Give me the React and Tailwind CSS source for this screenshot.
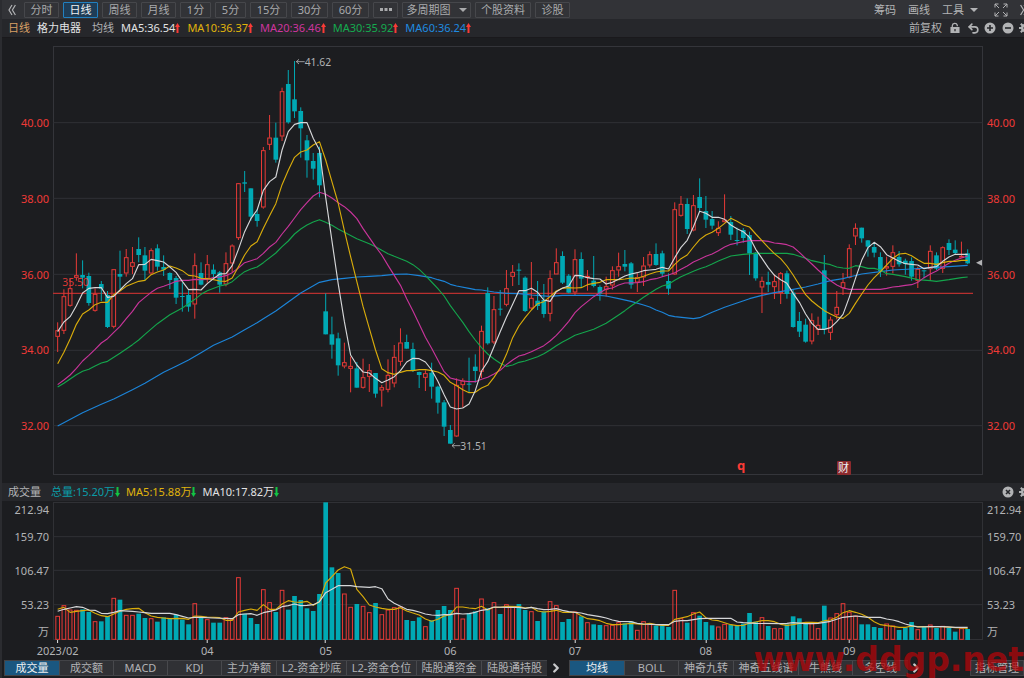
import { ChevronRight, Undo2 } from 'lucide-react'

const UP = '#e83a37'
const DOWN = '#00a9b4'

// 坐标系: 每根K线间隔 18.7, 第一根在 x=173
const xAt = (i) => 173 + (i * 910 * 3) / 146

// [涨=1/跌=0, 最高, 实体上沿, 实体下沿, 最低, 成交量]
const candles = [
  [1, 847, 871, 890, 936, 408], [1, 748, 769, 872, 882, 376], [1, 715, 745, 797, 800, 389], [1, 640, 706, 713, 722, 390],
  [0, 661, 705, 713, 745, 388], [0, 698, 708, 789, 797, 396], [1, 745, 762, 812, 815, 424], [0, 723, 732, 746, 783, 424],
  [0, 753, 765, 861, 864, 408], [1, 688, 688, 860, 865, 354], [0, 632, 702, 710, 747, 359], [1, 627, 652, 700, 710, 405],
  [1, 621, 667, 680, 702, 405], [0, 592, 627, 645, 667, 401], [0, 621, 646, 692, 722, 414], [1, 625, 631, 700, 705, 415],
  [0, 613, 625, 680, 692, 425], [0, 646, 681, 689, 708, 412], [0, 697, 699, 720, 747, 416], [0, 708, 714, 773, 792, 404],
  [0, 728, 768, 771, 815, 419], [0, 751, 765, 800, 815, 433], [1, 640, 676, 793, 836, 370], [0, 667, 699, 734, 736, 413],
  [1, 645, 673, 716, 728, 418], [0, 673, 689, 702, 717, 428], [0, 693, 697, 734, 758, 428], [1, 637, 670, 733, 739, 412],
  [1, 613, 617, 670, 698, 418], [1, 429, 430, 594, 600, 292], [0, 393, 427, 431, 456, 401], [0, 445, 445, 530, 542, 414],
  [0, 507, 522, 543, 560, 432], [1, 321, 331, 502, 506, 328], [1, 225, 293, 314, 330, 367], [0, 248, 293, 359, 368, 396],
  [1, 143, 154, 289, 303, 330], [0, 90, 132, 247, 251, 389], [0, 63, 178, 214, 234, 348], [0, 202, 213, 265, 353, 360],
  [0, 285, 301, 361, 413, 385], [0, 339, 363, 386, 419, 393], [0, 320, 339, 436, 472, 342], [0, 760, 814, 883, 883, 67],
  [0, 830, 883, 914, 956, 262], [0, 878, 895, 976, 1007, 279], [1, 908, 967, 979, 985, 341], [1, 950, 978, 986, 1057, 381],
  [0, 966, 985, 1043, 1043, 372], [1, 956, 1012, 1043, 1046, 378], [1, 972, 991, 1010, 1056, 397], [0, 999, 999, 1061, 1073, 369],
  [1, 1035, 1042, 1051, 1100, 403], [1, 958, 1005, 1049, 1057, 389], [1, 915, 951, 1030, 1042, 382], [1, 865, 908, 965, 977, 380],
  [0, 884, 906, 926, 926, 420], [0, 908, 927, 993, 996, 423], [0, 995, 996, 1005, 1044, 412], [1, 991, 1000, 1013, 1053, 439],
  [0, 968, 998, 1040, 1076, 421], [0, 1037, 1040, 1088, 1121, 390], [0, 1080, 1087, 1160, 1188, 378], [0, 1155, 1170, 1211, 1211, 390],
  [1, 1015, 1035, 1189, 1191, 324], [1, 1015, 1022, 1035, 1103, 416], [0, 953, 1031, 1034, 1057, 399], [0, 943, 980, 993, 1028, 394],
  [1, 857, 873, 995, 1014, 356], [0, 742, 759, 910, 914, 385], [1, 768, 808, 907, 912, 367], [0, 750, 806, 809, 827, 402],
  [1, 690, 745, 794, 799, 373], [1, 675, 696, 710, 738, 380], [0, 670, 689, 692, 735, 372], [0, 709, 713, 813, 816, 390],
  [1, 666, 774, 805, 807, 394], [0, 723, 782, 798, 810, 423], [0, 732, 780, 822, 833, 394], [1, 691, 715, 821, 844, 364],
  [1, 625, 667, 703, 703, 376], [0, 634, 648, 728, 732, 426], [0, 702, 707, 758, 760, 417], [1, 628, 658, 757, 766, 395],
  [0, 637, 657, 716, 742, 409], [1, 690, 708, 713, 752, 427], [0, 648, 722, 738, 742, 433], [0, 736, 741, 761, 782, 435],
  [1, 710, 739, 749, 770, 436], [1, 679, 691, 736, 749, 435], [1, 638, 679, 691, 710, 427], [0, 630, 672, 680, 694, 430],
  [0, 666, 670, 734, 746, 424], [1, 700, 712, 727, 756, 450], [1, 651, 677, 712, 738, 424], [1, 634, 643, 676, 683, 430],
  [0, 610, 642, 675, 677, 437], [0, 632, 640, 701, 710, 436], [0, 700, 723, 746, 764, 441], [1, 487, 508, 703, 705, 330],
  [1, 468, 492, 527, 530, 415], [0, 475, 492, 567, 582, 428], [1, 465, 496, 571, 574, 397], [0, 415, 471, 504, 513, 407],
  [0, 468, 513, 539, 564, 426], [0, 513, 537, 557, 568, 436], [1, 544, 564, 579, 588, 440], [1, 463, 539, 546, 547, 432],
  [0, 528, 546, 584, 600, 435], [0, 563, 600, 603, 616, 438], [0, 564, 570, 594, 608, 431], [0, 575, 585, 640, 705, 399],
  [0, 636, 638, 715, 722, 425], [1, 710, 723, 742, 819, 412], [0, 695, 726, 734, 756, 438], [1, 703, 724, 741, 777, 445],
  [1, 696, 700, 759, 792, 445], [0, 692, 700, 762, 776, 433], [0, 748, 758, 861, 863, 409], [0, 816, 843, 875, 891, 415],
  [0, 836, 854, 905, 908, 430], [1, 820, 841, 904, 913, 430], [1, 830, 855, 869, 885, 445], [0, 645, 691, 868, 883, 377],
  [1, 830, 839, 878, 900, 413], [1, 753, 801, 825, 838, 400], [1, 699, 727, 744, 765, 370], [1, 613, 625, 713, 715, 396],
  [1, 550, 564, 589, 615, 407], [0, 563, 563, 595, 608, 433], [0, 600, 601, 620, 650, 433], [0, 607, 621, 638, 652, 441],
  [0, 637, 651, 693, 711, 444], [1, 650, 679, 685, 707, 431], [1, 616, 637, 680, 700, 437], [0, 633, 651, 673, 680, 450],
  [0, 656, 662, 672, 704, 442], [0, 652, 663, 710, 722, 426], [1, 680, 687, 722, 744, 448], [0, 691, 691, 694, 715, 441],
  [1, 616, 633, 687, 723, 434], [0, 637, 646, 686, 690, 444], [1, 619, 622, 686, 699, 438], [0, 598, 609, 630, 645, 444],
  [0, 601, 629, 639, 645, 455], [1, 605, 648, 651, 652, 445], [0, 628, 640, 670, 672, 447],
]

// 均线: "序号,y"
const priceLines = [
  {
    color: '#1c84d8',
    data: '0,1158 4,1118 7,1093 9,1077 12,1049 14,1030 17,997 19,979 21,960 23,938 25,916 27,899 28,891 30,869 32,848 33,836 35,813 37,786 39,759 42,727 44,719 46,715 48,711 50,709 52,707 54,703 56,702 58,707 60,713 61,719 62,724 63,733 64,738 66,745 67,749 68,750 70,756 72,760 74,761 76,765 79,769 81,766 87,766 88,768 90,776 92,784 94,795 95,801 96,810 97,817 98,826 99,830 102,836 103,833 105,817 107,802 109,789 111,776 113,766 115,758 118,748 120,741 122,732 124,722 126,716 127,711 129,702 132,695 134,690 137,687 140,683 143,680 146,676',
  },
  {
    color: '#14a54c',
    data: '0,1041 1,1030 2,1017 3,1004 4,994 5,988 6,978 7,969 8,964 10,940 12,914 13,900 14,883 16,851 18,824 20,804 22,778 23,763 24,752 26,738 27,734 28,725 29,709 30,695 31,687 32,681 33,668 35,639 36,620 37,603 38,582 39,567 40,555 41,546 42,539 43,547 44,556 45,567 46,577 48,596 50,611 51,620 52,631 53,641 54,649 55,656 56,664 57,674 58,688 59,706 60,726 61,746 62,768 63,797 64,822 65,847 66,875 67,900 68,923 69,942 70,957 71,970 72,979 73,975 74,967 75,963 77,950 78,941 79,930 80,917 81,906 82,896 83,886 84,880 86,868 88,850 90,825 91,812 92,798 93,785 94,772 95,760 96,748 97,738 98,733 99,721 100,710 101,702 102,694 103,686 104,680 105,672 106,663 108,648 110,643 112,640 117,640 118,643 120,655 121,662 123,670 124,674 125,681 126,684 127,685 128,677 129,680 130,685 131,685 132,690 133,701 134,703 136,710 138,719 140,722 141,724 143,719 145,713 146,711',
  },
  {
    color: '#c8349a',
    data: '0,1034 1,1020 2,1005 3,985 4,963 5,946 6,928 7,909 8,896 9,877 10,859 11,836 12,814 13,788 14,772 15,757 16,745 17,739 18,732 19,724 20,721 21,721 22,718 23,719 24,718 25,713 26,711 27,707 28,698 29,684 30,668 31,662 32,656 33,640 34,621 35,607 36,582 37,559 38,534 39,509 40,488 41,468 42,457 43,463 44,474 45,488 46,500 47,516 48,536 49,566 50,593 51,620 52,645 53,676 54,706 55,736 56,776 57,813 58,852 59,892 60,925 61,960 62,995 63,1014 64,1019 65,1023 66,1025 67,1025 68,1018 69,1012 70,1002 71,991 72,974 73,960 74,948 75,943 76,935 77,926 78,917 79,903 80,886 81,866 82,844 83,818 84,800 85,785 86,770 87,758 88,747 89,744 90,735 91,729 93,728 94,725 95,719 96,716 97,710 98,705 99,698 100,688 101,678 102,666 103,658 104,649 105,642 106,632 107,621 108,613 109,609 110,605 111,602 113,602 114,604 115,609 116,611 117,614 118,621 119,637 120,655 121,672 122,690 123,707 124,722 125,735 126,744 127,748 132,748 133,745 134,741 135,739 136,736 137,734 138,727 139,713 140,702 141,693 142,681 143,670 144,661 145,654 146,648',
  },
  {
    color: '#d9ac0b',
    data: '0,971 1,937 2,897 3,853 4,822 5,810 6,794 7,787 8,787 9,764 10,753 11,739 12,731 13,724 14,721 15,704 16,696 17,690 18,678 19,684 20,692 21,706 22,708 23,715 24,716 25,719 26,723 27,724 28,714 29,680 30,645 31,618 32,605 33,565 34,527 35,491 36,434 37,391 38,352 39,336 40,330 41,315 42,305 43,360 44,425 45,489 46,572 47,650 48,725 49,800 50,865 51,930 52,986 53,998 54,1003 55,997 56,992 57,992 58,989 59,989 60,992 61,996 62,1006 63,1027 64,1037 65,1049 66,1058 67,1057 68,1044 69,1036 70,1012 71,984 72,943 73,893 74,858 75,833 76,810 77,791 78,785 79,770 80,753 81,745 82,743 83,744 84,743 85,734 86,730 87,727 88,719 90,719 91,717 92,714 93,715 94,709 95,702 96,696 97,693 98,693 99,673 100,656 101,645 102,621 103,599 104,585 105,577 106,565 107,550 108,535 109,544 110,555 111,561 112,582 113,602 114,622 115,641 116,656 117,678 118,705 119,735 120,764 121,783 122,798 123,812 124,822 125,831 126,835 127,820 128,790 129,762 130,735 131,713 132,695 133,675 134,655 135,642 136,640 137,647 138,659 139,670 140,670 141,673 142,668 143,664 144,664 145,661 146,661',
  },
  {
    color: '#d6d7d9',
    data: '0,875 1,846 2,830 3,797 4,759 5,745 6,743 7,743 8,772 9,769 10,750 11,731 12,716 13,674 14,673 15,658 16,662 17,666 18,681 19,697 20,724 21,749 22,748 23,750 24,731 25,716 26,702 27,701 28,677 29,628 30,575 31,536 32,510 33,451 34,425 35,411 36,330 37,275 38,253 39,248 40,248 41,295 42,330 43,472 44,602 45,730 46,845 47,945 48,975 49,996 50,999 51,1015 52,1028 53,1020 54,1010 55,992 56,966 57,955 58,956 59,966 60,990 61,1024 62,1064 63,1101 64,1107 65,1104 66,1092 67,1052 68,993 69,965 70,920 71,875 72,832 73,793 74,752 75,752 76,745 77,757 78,780 79,784 80,755 81,744 82,738 83,706 84,707 85,713 86,716 87,717 88,732 89,727 90,718 91,708 92,702 93,698 94,692 95,690 96,688 97,682 98,687 99,653 100,622 101,601 102,560 103,514 104,520 105,532 106,532 107,538 108,555 109,566 110,575 111,592 112,628 113,655 114,683 115,706 116,719 117,730 118,760 119,787 120,822 121,850 122,868 123,868 124,863 125,845 126,823 127,772 128,715 129,661 130,623 131,607 132,620 133,644 134,654 135,664 136,671 137,673 138,675 139,686 140,682 141,680 142,664 143,651 144,643 146,643',
  },
]

const volumeLines = [
  {
    color: '#d9ac0b',
    data: '0,388 1,382 2,397 3,394 4,392 5,390 6,400 7,407 8,410 9,402 10,394 11,388 12,386 13,385 14,398 15,408 16,412 17,414 18,416 20,415 21,418 22,408 23,409 24,411 26,413 27,421 28,421 29,396 30,391 31,387 32,391 33,374 34,388 35,388 36,372 37,362 38,366 39,367 40,364 41,376 42,365 43,309 44,290 45,270 46,260 47,267 48,328 49,350 50,375 51,381 52,385 53,388 54,388 55,383 56,393 57,399 58,405 59,417 60,424 61,418 62,408 63,404 64,381 65,381 66,384 67,386 68,379 69,390 70,382 71,382 72,379 74,380 75,384 76,382 77,393 78,396 79,394 80,391 81,397 83,397 84,407 85,416 86,418 87,422 88,430 89,434 90,434 91,432 92,430 93,432 94,433 95,430 96,434 97,436 98,436 99,418 100,414 101,410 102,402 103,396 104,413 105,420 106,422 107,428 108,434 109,437 110,436 111,430 112,426 113,422 114,422 115,425 116,433 117,436 118,434 119,430 120,427 121,427 122,428 123,422 124,420 125,412 126,398 127,392 128,397 129,403 130,412 131,425 132,434 133,437 134,439 135,442 136,442 137,438 138,440 142,440 144,443 145,444 146,445',
  },
  {
    color: '#d6d7d9',
    data: '0,394 1,388 2,384 3,380 4,382 5,390 6,391 7,400 8,401 9,397 10,392 12,394 13,396 14,398 15,400 18,400 19,404 20,409 21,414 22,412 23,412 25,414 28,416 29,404 30,402 31,401 32,406 33,398 34,394 35,390 36,380 37,377 38,372 39,377 40,376 41,374 42,365 43,338 44,328 45,317 47,317 48,320 50,322 51,320 52,326 53,357 54,370 55,379 56,388 57,391 58,396 59,402 60,405 61,406 62,404 63,404 64,400 65,402 66,401 67,397 68,391 69,388 70,381 72,382 74,382 75,385 76,382 77,386 78,389 79,388 80,386 81,391 82,395 83,397 84,399 85,404 86,407 87,410 88,414 89,420 90,424 92,425 93,430 94,432 96,434 98,434 99,424 100,422 101,422 102,419 103,416 104,415 108,415 109,426 110,428 112,430 116,431 117,430 118,428 120,431 121,431 122,430 123,427 124,424 125,418 126,412 127,410 128,408 129,410 130,412 132,412 133,417 134,420 135,425 136,432 137,437 138,441 140,440 142,440 144,442 146,442',
  },
]

const toPoints = (data) =>
  data
    .split(' ')
    .map((pair) => {
      const [i, y] = pair.split(',').map(Number)
      return `${xAt(i)},${y}`
    })
    .join(' ')

const periods = [
  ['分时', 'w-[35px]'],
  ['日线', 'w-[35px]'],
  ['周线', 'w-[35px]'],
  ['月线', 'w-[35px]'],
  ['1分', 'w-[31px]'],
  ['5分', 'w-[31px]'],
  ['15分', 'w-[37px]'],
  ['30分', 'w-[37px]'],
  ['60分', 'w-[37px]'],
]

const maLegend = [
  ['MA5:36.54', 'text-[#e2e3e4]'],
  ['MA10:36.37', 'text-[#e0b40c]'],
  ['MA20:36.46', 'text-[#cf359f]'],
  ['MA30:35.92', 'text-[#15ab4f]'],
  ['MA60:36.24', 'text-[#1f8be0]'],
]

const months = [
  [0, '2023/02'],
  [24, '04'],
  [43, '05'],
  [63, '06'],
  [83, '07'],
  [104, '08'],
  [127, '09'],
]

const indicatorTabs = [
  ['成交量', 'w-[55px]'],
  ['成交额', 'w-[54px]'],
  ['MACD', 'w-[54px]'],
  ['KDJ', 'w-[54px]'],
  ['主力净额', 'w-[55px]'],
  ['L2-资金抄底', 'w-[70px]'],
  ['L2-资金仓位', 'w-[70px]'],
  ['陆股通资金', 'w-[65px]'],
  ['陆股通持股', 'w-[65px]'],
]

const overlayTabs = [
  ['均线', 'w-[55px]'],
  ['BOLL', 'w-[54px]'],
  ['神奇九转', 'w-[55px]'],
  ['神奇五线谱', 'w-[65px]'],
  ['牛熊线', 'w-[54px]'],
  ['多空线', 'w-[55px]'],
]

const Arrow = ({ down }) => (
  <svg viewBox="0 0 5 10" className={`w-[5px] h-[10px] shrink-0 ${down ? 'rotate-180 text-[#12c443]' : 'text-[#fa3b36]'}`}>
    <path d="M2.500 0L5 4H3.500V10H1.500V4H0Z" fill="currentColor" />
  </svg>
)

const Caret = () => (
  <svg viewBox="0 0 8 4" className="w-2 h-1 shrink-0">
    <path d="M0 0H8L4 4Z" fill="currentColor" />
  </svg>
)

const DoubleChevron = ({ right }) => (
  <svg viewBox="0 0 8 12" className={`w-2 h-3 shrink-0 ${right ? 'rotate-180' : ''}`} fill="none" stroke="currentColor" strokeWidth="1.200">
    <path d="M4 1L1 6L4 11M7.400 1L4.400 6L7.400 11" />
  </svg>
)

const Gear = () => (
  <svg viewBox="0 0 12 12" className="size-3">
    <g stroke="currentColor" strokeWidth="2">
      <path d="M6 0V12M0 6H12M1.800 1.800L10.200 10.200M10.200 1.800L1.800 10.200" />
    </g>
    <circle cx="6" cy="6" r="4" fill="currentColor" />
    <circle cx="6" cy="6" r="1.600" fill="#26272b" />
  </svg>
)

const ToolButton = ({ width, active, label, children }) => (
  <button
    type="button"
    aria-label={label}
    className={`${width} h-4 shrink-0 flex items-center justify-center gap-2 border rounded-[1px] whitespace-nowrap ${
      active ? 'bg-[#1f3d57] border-[#2180c0] text-[#f0f1f2]' : 'border-[#46474b] text-[#a9aaac]'
    }`}
  >
    {children}
  </button>
)

const Toolbar = () => (
  <div className="h-[19px] flex items-center justify-between bg-[#323337] text-[#b2b3b5] overflow-hidden">
    <div className="flex items-center gap-1 pl-[2px]">
      <button type="button" aria-label="收起" className="w-4 flex justify-center">
        <DoubleChevron />
      </button>
      {periods.map(([name, width]) => (
        <ToolButton key={name} width={width} active={name === '日线'}>{name}</ToolButton>
      ))}
      <ToolButton width="w-[25px]" label="更多">
        <svg viewBox="0 0 12 3" className="w-3 h-[3px]" fill="currentColor">
          <rect x="0" width="3" height="3" />
          <rect x="4.5" width="3" height="3" />
          <rect x="9" width="3" height="3" />
        </svg>
      </ToolButton>
      <ToolButton width="w-[69px]">多周期图<Caret /></ToolButton>
      <ToolButton width="w-[56px]">个股资料</ToolButton>
      <ToolButton width="w-[35px]">诊股</ToolButton>
    </div>
    <div className="flex items-center gap-3 shrink-0 -mr-1">
      <button type="button">筹码</button>
      <button type="button">画线</button>
      <button type="button" className="mr-1 flex items-center gap-[6px]">工具<Caret /></button>
      <button type="button" aria-label="全屏">
        <svg viewBox="0 0 14 14" className="size-[14px]" fill="none" stroke="currentColor">
          <path d="M1 4.500V1H4.500M1 1L5 5M9.500 1H13V4.500M13 1L9 5M13 9.500V13H9.500M13 13L9 9M4.500 13H1V9.500M1 13L5 9" />
        </svg>
      </button>
      <button type="button" aria-label="展开">
        <DoubleChevron right />
      </button>
    </div>
  </div>
)

const Legend = () => (
  <div className="h-[19px] flex items-center justify-between bg-[#26272b] border-b border-[#1a191c] text-[#b2b3b5] overflow-hidden">
    <div className="flex items-center pl-[6px] whitespace-nowrap">
      <span className="text-[#d9a066] mr-[7px]">日线</span>
      <h1 className="text-[#e2e3e4] mr-[11px]">格力电器</h1>
      <span className="mr-[7px]">均线</span>
      <div className="flex items-center gap-[7px]">
        {maLegend.map(([text, color]) => (
          <span key={text} className={`flex items-center ${color}`}>
            {text}
            <Arrow />
          </span>
        ))}
      </div>
    </div>
    <div className="flex items-center shrink-0 -mr-[7px]">
      <button type="button" className="mr-2">前复权</button>
      <button type="button" aria-label="锁定" className="mr-[7px]">
        <svg viewBox="0 0 11 12" className="w-[10px] h-[12px]">
          <path d="M2.500 5V3.500A2.800 2.800 0 0 1 8 3V4" fill="none" stroke="currentColor" strokeWidth="1.400" />
          <path fillRule="evenodd" d="M0.500 5H10.500V11.500H0.500ZM4.800 7V9.500H6.200V7Z" fill="currentColor" />
        </svg>
      </button>
      <button type="button" aria-label="撤销" className="mr-1">
        <Undo2 className="size-[13px]" strokeWidth={3} />
      </button>
      <button type="button" aria-label="放大" className="mr-[6px]">
        <svg viewBox="0 0 12 12" className="size-3">
          <circle cx="6" cy="6" r="5.500" fill="currentColor" />
          <path d="M6 3V9M3 6H9" stroke="#26272b" strokeWidth="1.600" />
        </svg>
      </button>
      <button type="button" aria-label="缩小" className="mr-[5px]">
        <svg viewBox="0 0 12 12" className="size-3">
          <circle cx="6" cy="6" r="5.500" fill="currentColor" />
          <path d="M3 6H9" stroke="#26272b" strokeWidth="1.600" />
        </svg>
      </button>
      <button type="button" aria-label="设置">
        <Gear />
      </button>
    </div>
  </div>
)

const Candle = ({ index, data }) => {
  const [up, high, top, bottom, low] = data
  const x = xAt(index)
  const height = Math.max(bottom - top, 3)
  if (up) {
    return (
      <g stroke={UP} strokeWidth="3" fill="none">
        <path d={`M${x} ${high}V${top}M${x} ${bottom}V${low}`} />
        <rect x={x - 5.5} y={top + 1} width="11" height={Math.max(height - 2, 2)} />
      </g>
    )
  }
  return (
    <g fill={DOWN}>
      <rect x={x - 1.5} y={high} width="3" height={low - high} />
      <rect x={x - 7} y={top} width="14" height={height} />
    </g>
  )
}

const PriceAxis = ({ align }) => (
  <div className={`shrink-0 flex flex-col justify-between pt-[69px] pb-[41px] text-[#ef3a37] ${align}`}>
    <span>40.00</span>
    <span>38.00</span>
    <span>36.00</span>
    <span>34.00</span>
    <span>32.00</span>
  </div>
)

const PriceChart = () => (
  <section className="flex-1 flex pt-2 pb-2">
    <PriceAxis align="w-[53px] pr-1 text-right" />
    <div className="flex-1 relative">
      <svg viewBox="159 18 2790 1287" preserveAspectRatio="none" className="absolute inset-0 size-full">
        <rect x="160.500" y="19.500" width="2787" height="1284" fill="none" stroke="#34353a" strokeWidth="3" />
        {[248, 475, 703, 931, 1157].map((y) => (
          <path key={y} d={`M159 ${y}H2949`} stroke="#303135" strokeWidth="3" />
        ))}
        <path d="M159 760H2919" stroke="#b8302f" strokeWidth="4" />
        {candles.map((data, i) => (
          <Candle key={i} index={i} data={data} />
        ))}
        {priceLines.map(({ color, data }) => (
          <polyline key={color} points={toPoints(data)} fill="none" stroke={color} strokeWidth="3.400" strokeLinejoin="round" />
        ))}
        <text x="187" y="738" fontSize="31" fill="#dc3835">35.50</text>
        <g stroke="#b2b3b5" strokeWidth="2.500" fill="none">
          <path d="M889 65H914M897 58L889 65L897 72" />
          <path d="M1356 1217H1381M1364 1210L1356 1217L1364 1224" />
        </g>
        <g fontSize="31" fill="#b2b3b5">
          <text x="914" y="78">41.62</text>
          <text x="1381" y="1230">31.51</text>
        </g>
        <path d="M2928 668L2946 659V677Z" fill="#b2b3b5" />
      </svg>
      <span className="absolute left-[74%] bottom-0 -translate-x-1/2 h-[18px] text-[13px] leading-4 font-bold text-[#fa3b36]">q</span>
      <span className="absolute left-[85%] bottom-0 -translate-x-1/2 size-[14px] leading-[14px] text-center rounded-[1px] bg-[#8c2a2d] text-[#f0f1f2]">财</span>
    </div>
    <PriceAxis align="w-[41px] pl-1" />
  </section>
)

const VolumeHeader = () => (
  <div className="h-[18px] flex items-center justify-between bg-[#26272b] text-[#b2b3b5] overflow-hidden">
    <div className="flex items-center pl-[6px] whitespace-nowrap">
      <h2 className="mr-[10px]">成交量</h2>
      <div className="flex items-center gap-[6px]">
        <span className="flex items-center text-[#0a9da8]">总量:15.20万<Arrow down /></span>
        <span className="flex items-center text-[#e0b40c]">MA5:15.88万<Arrow down /></span>
        <span className="flex items-center text-[#e2e3e4]">MA10:17.82万<Arrow down /></span>
      </div>
    </div>
    <div className="flex items-center gap-[5px] shrink-0 -mr-[7px]">
      <button type="button" aria-label="关闭">
        <svg viewBox="0 0 12 12" className="size-3">
          <circle cx="6" cy="6" r="5.500" fill="currentColor" />
          <path d="M4 4L8 8M8 4L4 8" stroke="#26272b" strokeWidth="1.600" />
        </svg>
      </button>
      <button type="button" aria-label="指标设置">
        <Gear />
      </button>
    </div>
  </div>
)

const VolumeAxis = ({ align }) => (
  <div className={`shrink-0 flex flex-col leading-4 text-[#b2b3b5] ${align}`}>
    <span>212.94</span>
    <span className="mt-[11px]">159.70</span>
    <span className="mt-[18px]">106.47</span>
    <span className="mt-[18px]">53.23</span>
    <span className="mt-[11px]">万</span>
  </div>
)

const VolumeChart = () => (
  <section className="flex pt-px">
    <VolumeAxis align="w-[53px] pr-1 items-end" />
    <div className="flex-1 flex flex-col">
      <div className="h-[138px] relative">
        <svg viewBox="159 66 2790 414" preserveAspectRatio="none" className="absolute inset-0 size-full">
          <rect x="160.500" y="67.500" width="2787" height="411" fill="none" stroke="#303135" strokeWidth="3" />
          {[170, 271, 374].map((y) => (
            <path key={y} d={`M159 ${y}H2949`} stroke="#303135" strokeWidth="3" />
          ))}
          {candles.map(([up, , , , , top], i) =>
            up ? (
              <rect key={i} x={xAt(i) - 5.5} y={top + 1} width="11" height={477 - top} fill="none" stroke={UP} strokeWidth="3" />
            ) : (
              <rect key={i} x={xAt(i) - 7} y={top} width="14" height={480 - top} fill={DOWN} />
            )
          )}
          {volumeLines.map(({ color, data }) => (
            <polyline key={color} points={toPoints(data)} fill="none" stroke={color} strokeWidth="3.400" strokeLinejoin="round" />
          ))}
        </svg>
      </div>
      <div className="h-5 relative text-[#b2b3b5]">
        {months.map(([i, name]) => (
          <div
            key={name}
            className="absolute top-0 -translate-x-1/2 flex flex-col items-center"
            style={{ left: `${((xAt(i) - 159) / 2790) * 100}%` }}
          >
            <span className="w-px h-[3px] bg-[#e2e3e4]" />
            <span className="leading-4">{name}</span>
          </div>
        ))}
      </div>
    </div>
    <VolumeAxis align="w-[41px] pl-1 items-start" />
  </section>
)

const TabGroup = ({ tabs, active }) => (
  <div className="flex border border-[#424347]">
    {tabs.map(([name, width]) => (
      <button
        key={name}
        type="button"
        className={`${width} h-[14px] leading-[14px] text-center whitespace-nowrap border-r border-[#48494d] last:border-r-0 last:-mr-px ${
          name === active ? 'bg-[#1a5780] text-[#f0f1f2]' : 'bg-[#303135] text-[#b2b3b5]'
        }`}
      >
        {name}
      </button>
    ))}
  </div>
)

const BottomTabs = () => (
  <nav className="flex items-center justify-between pl-[2px] pb-[2px] overflow-hidden text-[#c8c9cb]">
    <div className="flex items-center">
      <TabGroup tabs={indicatorTabs} active="成交量" />
      <button type="button" aria-label="更多指标" className="w-[22px] pr-1 flex justify-center">
        <ChevronRight className="size-[14px]" strokeWidth={4} />
      </button>
      <TabGroup tabs={overlayTabs} active="均线" />
      <button type="button" aria-label="更多叠加" className="w-4 flex justify-center">
        <ChevronRight className="size-[14px]" strokeWidth={4} />
      </button>
    </div>
    <button type="button" className="h-4 w-[54px] shrink-0 leading-[14px] border border-[#424347] bg-[#303135] text-[#b2b3b5] text-center whitespace-nowrap">
      指标管理
    </button>
  </nav>
)

const App = () => (
  <main className="relative min-h-screen flex flex-col overflow-hidden bg-[#1c1d20] border-l-2 border-[#2b2c30] text-[11px] leading-4 font-['Noto_Sans','Noto_Sans_CJK_SC',sans-serif]">
    <Toolbar />
    <Legend />
    <div className="flex-1 flex flex-col -ml-[2px]">
      <PriceChart />
      <div className="pl-[2px]">
        <VolumeHeader />
      </div>
      <VolumeChart />
    </div>
    <BottomTabs />
    <div className="absolute right-0 bottom-0 h-9 leading-9 text-[33px] font-bold text-[#b0060a]/75 pointer-events-none font-['DejaVu_Sans',sans-serif]">
      www.ddgp.net
    </div>
  </main>
)

export default App
